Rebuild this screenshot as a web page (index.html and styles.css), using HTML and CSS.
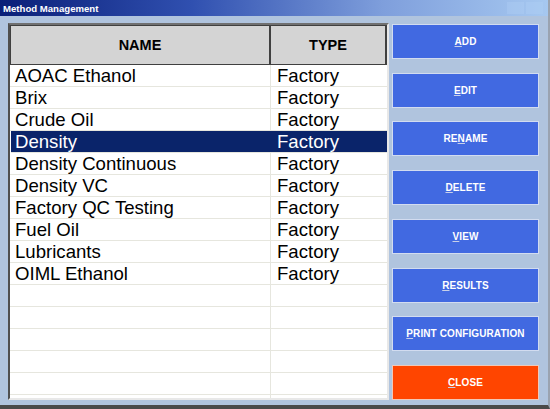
FILE: index.html
```html
<!DOCTYPE html>
<html>
<head>
<meta charset="utf-8">
<link rel="stylesheet" href="styles.css">
</head>
<body>
<div class="window">
  <div class="titlebar">
    <span class="title">Method Management</span>
    <span class="ghosts"><span class="ghost"></span><span class="ghost"></span></span>
  </div>
  <div class="content">
    <div class="grid">
      <div class="head">
        <div class="hcell name">NAME</div>
        <div class="hcell type">TYPE</div>
      </div>
      <div class="rows">
        <div class="row"><div class="cell name">AOAC Ethanol</div><div class="cell type">Factory</div></div>
        <div class="row"><div class="cell name">Brix</div><div class="cell type">Factory</div></div>
        <div class="row"><div class="cell name">Crude Oil</div><div class="cell type">Factory</div></div>
        <div class="row selected"><div class="cell name">Density</div><div class="cell type">Factory</div></div>
        <div class="row"><div class="cell name">Density Continuous</div><div class="cell type">Factory</div></div>
        <div class="row"><div class="cell name">Density VC</div><div class="cell type">Factory</div></div>
        <div class="row"><div class="cell name">Factory QC Testing</div><div class="cell type">Factory</div></div>
        <div class="row"><div class="cell name">Fuel Oil</div><div class="cell type">Factory</div></div>
        <div class="row"><div class="cell name">Lubricants</div><div class="cell type">Factory</div></div>
        <div class="row"><div class="cell name">OIML Ethanol</div><div class="cell type">Factory</div></div>
        <div class="row"><div class="cell name"></div><div class="cell type"></div></div>
        <div class="row"><div class="cell name"></div><div class="cell type"></div></div>
        <div class="row"><div class="cell name"></div><div class="cell type"></div></div>
        <div class="row"><div class="cell name"></div><div class="cell type"></div></div>
        <div class="row"><div class="cell name"></div><div class="cell type"></div></div>
        <div class="row"><div class="cell name"></div><div class="cell type"></div></div>
      </div>
    </div>
    <div class="buttons">
      <div class="btn"><u>A</u>DD</div>
      <div class="btn"><u>E</u>DIT</div>
      <div class="btn">RE<u>N</u>AME</div>
      <div class="btn"><u>D</u>ELETE</div>
      <div class="btn"><u>V</u>IEW</div>
      <div class="btn"><u>R</u>ESULTS</div>
      <div class="btn"><u>P</u>RINT CONFIGURATION</div>
      <div class="btn close"><u>C</u>LOSE</div>
    </div>
  </div>
</div>
</body>
</html>
```

FILE: styles.css
```css
html, body {
  margin: 0;
  padding: 0;
  width: 550px;
  height: 409px;
  overflow: hidden;
  background: #b0c4de;
}

.window {
  width: 550px;
  height: 409px;
  box-sizing: border-box;
  background: #b0c4de;
  border-right: 2px solid #9aa3b0;
  border-bottom: 4px solid #4a4a4a;
  display: flex;
  flex-direction: column;
  font-family: "Liberation Sans", Arial, sans-serif;
}

.titlebar {
  height: 16px;
  flex: none;
  background: linear-gradient(to right, #0a1f78 0%, #3050b0 35%, #7f9fdc 70%, #a6c8f0 100%);
  display: flex;
  align-items: center;
  justify-content: space-between;
  padding: 0 3px 0 3px;
}

.title {
  color: #ffffff;
  font-weight: bold;
  font-size: 9.6px;
}

.ghosts {
  display: flex;
  gap: 2px;
  margin-right: 2px;
}

.ghost {
  width: 17px;
  height: 12px;
  background: #b2d2f6;
  opacity: 0.35;
}

.content {
  flex: 1;
  display: flex;
  padding: 7px 0 5px 8px;
  gap: 3px;
  min-height: 0;
}

.grid {
  width: 381px;
  height: 377px;
  box-sizing: border-box;
  border-top: 2px solid #707070;
  border-left: 2px solid #505050;
  border-right: 2px solid #e8e8e8;
  border-bottom: 2px solid #e8e8e8;
  background: #ffffff;
  display: flex;
  flex-direction: column;
  overflow: hidden;
}

.head {
  display: flex;
  height: 40px;
  flex: none;
  background: #d4d4d4;
  border-bottom: 1px solid #404040;
  box-sizing: border-box;
}

.hcell {
  display: flex;
  align-items: center;
  justify-content: center;
  font-weight: bold;
  font-size: 14.5px;
  color: #000;
  box-sizing: border-box;
  border-top: 1px solid #404040;
}

.hcell.name {
  width: 261px;
  border-left: 1px solid #404040;
  border-right: 2px solid #404040;
}

.hcell.type {
  width: 116px;
  border-right: 2px solid #404040;
}

.rows {
  display: flex;
  flex-direction: column;
}

.row {
  display: flex;
  height: 22px;
  flex: none;
  box-sizing: border-box;
  border-bottom: 1px solid #e6e6de;
}

.cell {
  font-size: 18.6px;
  line-height: 22px;
  color: #000;
  padding-left: 5px;
  box-sizing: border-box;
  white-space: nowrap;
}

.cell.name {
  width: 261px;
  border-right: 1px solid #e6e6de;
}

.cell.type {
  width: 116px;
  padding-left: 6px;
}

.row.selected {
  background: #0a246a;
  margin-left: 1px;
}

.row.selected .cell {
  color: #ffffff;
  border-right-color: #0a246a;
}

.row.selected .cell.name {
  width: 260px;
  padding-left: 4px;
}

.buttons {
  width: 147px;
  height: 376px;
  margin-top: 1px;
  display: flex;
  flex-direction: column;
  justify-content: space-between;
}

.btn {
  height: 35px;
  box-sizing: border-box;
  background: #4169e1;
  border: 1.5px solid #d2dcf0;
  color: #ffffff;
  font-weight: bold;
  font-size: 10px;
  display: flex;
  align-items: center;
  justify-content: center;
  letter-spacing: 0.1px;
}

.btn u {
  text-decoration-color: #c8d0e8;
  text-underline-offset: 1px;
}

.btn.close {
  background: #ff4500;
  border-color: #f0c8b8;
}
```
